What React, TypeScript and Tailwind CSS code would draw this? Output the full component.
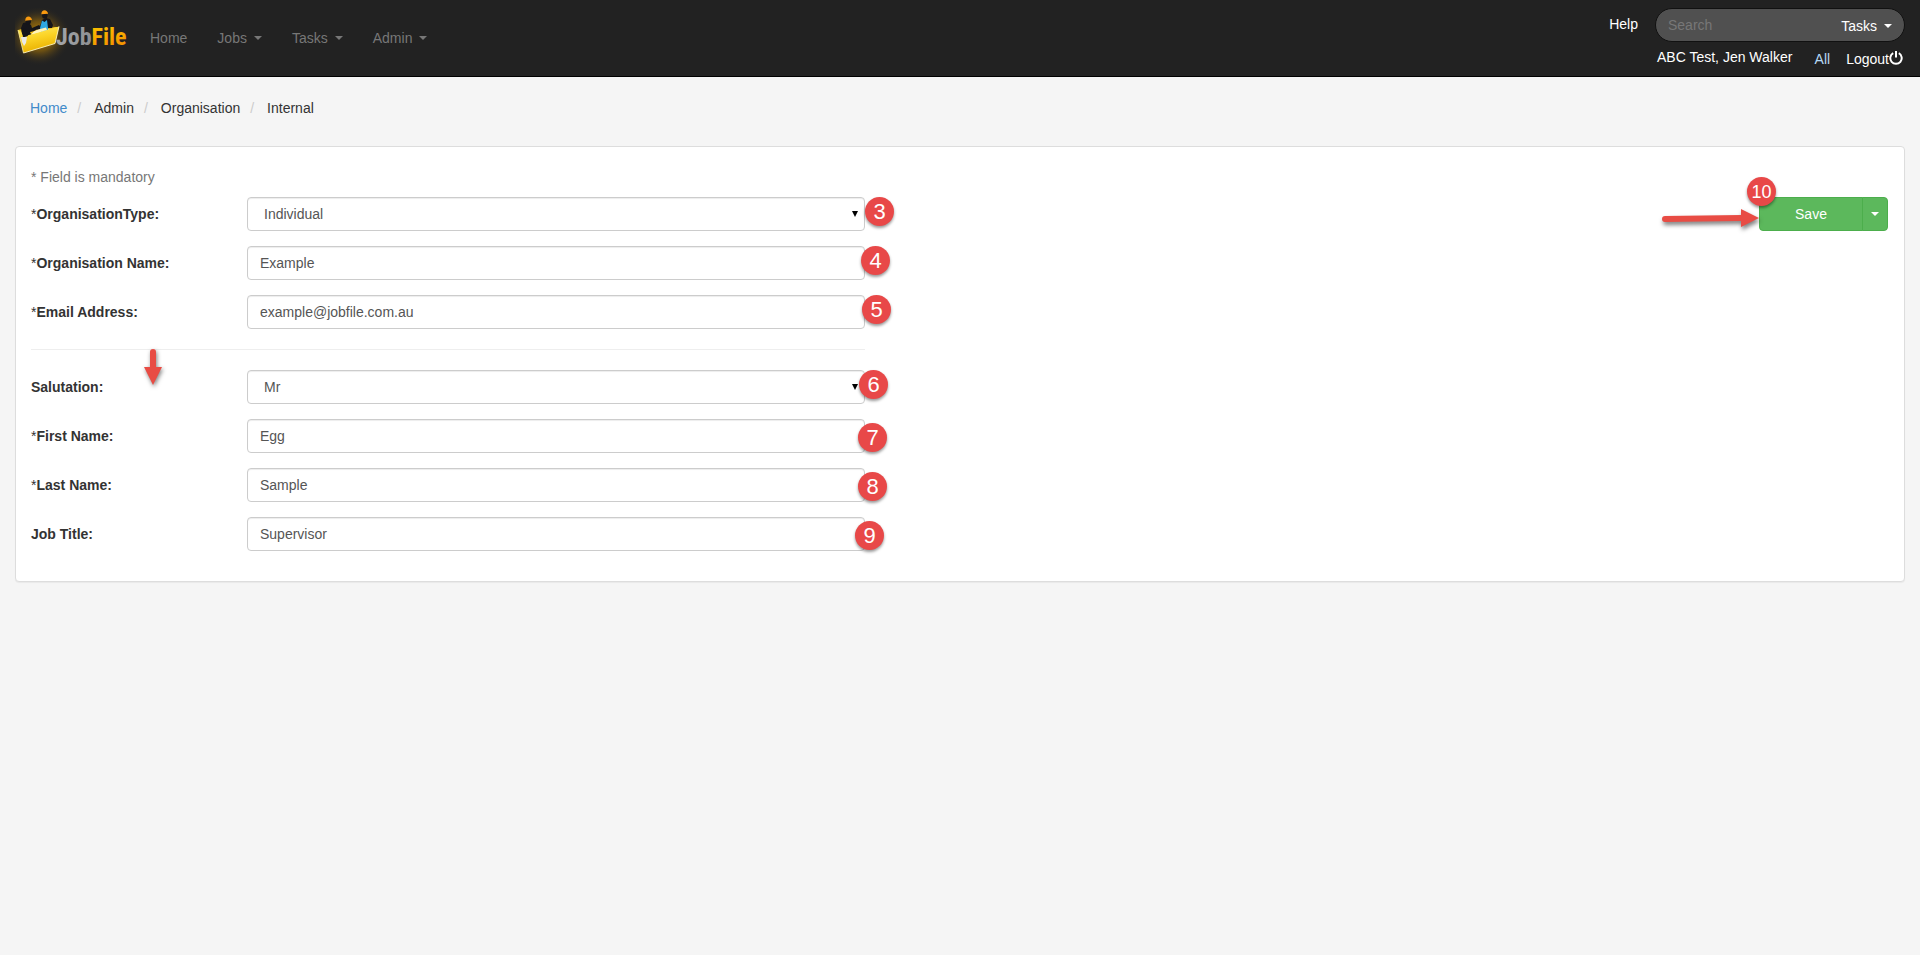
import type { ReactNode } from 'react'

function Caret() {
  return (
    <svg width="8" height="4" viewBox="0 0 8 4" className="shrink-0" aria-hidden="true">
      <path d="M0 0h8L4 4z" fill="currentColor" />
    </svg>
  )
}

function Logo() {
  return (
    <a href="#" aria-label="JobFile" className="block">
      <svg width="116" height="60" viewBox="15 8 116 60" aria-hidden="true">
        <defs>
          <radialGradient id="glow">
            <stop offset="0" stopColor="#f5a800" stopOpacity="0.8" />
            <stop offset="0.5" stopColor="#c98a00" stopOpacity="0.45" />
            <stop offset="1" stopColor="#222" stopOpacity="0" />
          </radialGradient>
          <linearGradient id="folder" x1="0" y1="0" x2="0.3" y2="1">
            <stop offset="0" stopColor="#ffec6a" />
            <stop offset="0.5" stopColor="#fbd325" />
            <stop offset="1" stopColor="#e9b000" />
          </linearGradient>
          <linearGradient id="silver" x1="0" y1="0" x2="1" y2="0">
            <stop offset="0" stopColor="#a5a7aa" />
            <stop offset="1" stopColor="#77797c" />
          </linearGradient>
          <linearGradient id="gold" x1="0" y1="0" x2="0.4" y2="1">
            <stop offset="0" stopColor="#ffd400" />
            <stop offset="1" stopColor="#f39200" />
          </linearGradient>
        </defs>
        <ellipse cx="39" cy="36" rx="32" ry="30" fill="url(#glow)" />
        <path d="M18 30l4-1 4 4 12-3 17-3 4 0-3 8-32 8z" fill="#f0c01c" />
        <path d="M31 35l4-4 12-3 3 2-4 3z" fill="#fff3b8" />
        <path d="M22 36l-1-8 2-5 4-1 4 3 1 3 7-3 2 2-7 4-4 1 2 4-6 2z" fill="#15151a" />
        <ellipse cx="28.300" cy="21.500" rx="2.700" ry="3" fill="#15151a" />
        <path d="M25.200 20.800c0-3 1.500-4.300 3.200-4.300s3.200 1.200 3.600 3.600z" fill="#f99a10" />
        <path d="M36 27l4-1 2-6 4-2 4 1 3 6-1 3-5 0-6 3-3 0z" fill="#15151a" />
        <ellipse cx="44.800" cy="15.500" rx="2.700" ry="3.200" fill="#15151a" />
        <path d="M41.300 14.300c0-3 1.500-4.100 3.200-4.100s3.200 1.200 3.600 3.600z" fill="#f99a10" />
        <path d="M42 20.500l2.500 1.500 2.500-2 1 8 0 3-7 1-1-4z" fill="#2fa8e2" />
        <path d="M18 30l3 1.500 2.500 5L59 26.500l-4 17L23.500 53z" fill="url(#folder)" />
        <path d="M18 30l5.500 23" stroke="#fff0a0" strokeWidth="0.8" />
        <path d="M23.500 53L55 43.500l4-17" stroke="#fff7c8" strokeWidth="0.9" fill="none" />
        <path d="M22 30l3-2 3 8-5 1.500z" fill="#15151a" />
        <path d="M31 34.500l3-3 4-2 8-2 1 2.500z" fill="#fff3b8" />
        <path d="M21 37l6 0-1 6-2 3-2-4z" fill="#e8e8e8" />
        <text
          x="56"
          y="45"
          fontSize="24"
          fontWeight="700"
          fontFamily="'Liberation Sans Narrow', 'Roboto Condensed', 'Liberation Sans', sans-serif"
        >
          <tspan fill="url(#silver)">Job</tspan>
          <tspan fill="url(#gold)">File</tspan>
        </text>
      </svg>
    </a>
  )
}

function NavItem({ label, menu = true }: { label: string; menu?: boolean }) {
  return (
    <li>
      <a href="#" className="flex items-center gap-[7px] px-[15px] py-2 text-[#777]">
        {label}
        {menu && <Caret />}
      </a>
    </li>
  )
}

function Badge({ n, place, small = false }: { n: number; place: string; small?: boolean }) {
  return (
    <span
      className={`absolute z-10 flex size-[29px] items-center justify-center rounded-full bg-[#e84848] text-white shadow-[0_2px_3px_rgba(0,0,0,0.4)] ${small ? 'text-lg' : 'text-[22px]'} ${place}`}
    >
      {n}
    </span>
  )
}

type FieldProps = {
  id: string
  label: string
  value: string
  required?: boolean
  select?: boolean
  badge: ReactNode
}

const control =
  'block h-[34px] w-full rounded border border-[#ccc] bg-white text-[#555] shadow-[inset_0_1px_1px_rgba(0,0,0,0.075)] outline-none focus:border-[#66afe9]'

function Field({ id, label, value, required, select, badge }: FieldProps) {
  return (
    <div className="flex items-center">
      <label htmlFor={id} className="w-[216px] shrink-0 font-bold text-[#333]">
        {required && <span className="font-normal">*</span>}
        {label}
      </label>
      <div className="relative flex-1">
        {select ? (
          <>
            <select id={id} defaultValue={value} className={`${control} appearance-none px-4`}>
              <option>{value}</option>
            </select>
            <svg width="6" height="6" viewBox="0 0 6 6" className="pointer-events-none absolute top-3.5 right-[7px]" aria-hidden="true">
              <path d="M0 0h6L3 6z" fill="#000" />
            </svg>
          </>
        ) : (
          <input id={id} type="text" defaultValue={value} className={`${control} px-3`} />
        )}
        {badge}
      </div>
    </div>
  )
}

export default function App() {
  return (
    <div className="min-h-screen bg-[#f5f5f5] font-['Liberation_Sans',Arial,sans-serif] text-sm leading-5 text-[#333]">
      <header className="flex h-[77px] items-start justify-between border-b border-black bg-[#222] px-[15px]">
        <div className="flex pt-2">
          <Logo />
          <nav className="ml-1 pt-3">
            <ul className="flex">
              <NavItem label="Home" menu={false} />
              <NavItem label="Jobs" />
              <NavItem label="Tasks" />
              <NavItem label="Admin" />
            </ul>
          </nav>
        </div>
        <div className="flex gap-[17px] pt-2">
          <a href="#" className="pt-1.5 text-white">
            Help
          </a>
          <div>
            <div className="flex h-[34px] w-[250px] items-center rounded-full border border-[#111] bg-[#505050] pr-3 pl-3">
              <input
                type="search"
                aria-label="Search"
                placeholder="Search"
                className="min-w-0 flex-1 bg-transparent text-white outline-none placeholder:text-[#777]"
              />
              <button type="button" className="flex items-center gap-[7px] pt-0.5 text-white">
                Tasks
                <Caret />
              </button>
            </div>
            <div className="flex justify-between px-0.5 pt-[5px] text-white">
              <span>ABC Test, Jen Walker</span>
              <div className="flex gap-4 pt-0.5">
                <a href="#" className="text-[#b5d9f5]">
                  All
                </a>
                <a href="#" className="flex">
                  Logout
                  <svg width="14" height="14" viewBox="0 0 14 14" className="mt-0.5" fill="none" stroke="currentColor" strokeWidth="2" aria-hidden="true">
                    <path d="M4.200 2.200a5.700 5.700 0 1 0 5.600 0" />
                    <path d="M7 0v6.500" />
                  </svg>
                </a>
              </div>
            </div>
          </div>
        </div>
      </header>

      <nav aria-label="Breadcrumb" className="px-[30px] pt-[21px]">
        <ol className="flex">
          <li>
            <a href="#" className="text-[#428bca]">
              Home
            </a>
          </li>
          {['Admin', 'Organisation', 'Internal'].map((item) => (
            <li key={item} className="flex">
              <span className="pr-[13px] pl-2.5 text-[#ccc]">/</span>
              {item}
            </li>
          ))}
        </ol>
      </nav>

      <main className="mx-[15px] mt-7 rounded border border-[#ddd] bg-white px-[15px] pt-5 pb-[30px] shadow-[0_1px_1px_rgba(0,0,0,0.05)]">
        <p className="text-[#777]">* Field is mandatory</p>
        <form className="mt-2.5 flex items-start justify-between" onSubmit={(e) => e.preventDefault()}>
          <div className="relative w-[calc(45%-2px)]">
            <div className="flex flex-col gap-[15px]">
              <Field id="type" label="OrganisationType:" value="Individual" required select badge={<Badge n={3} place="top-0 -right-[29px]" />} />
              <Field id="name" label="Organisation Name:" value="Example" required badge={<Badge n={4} place="top-0 -right-[25px]" />} />
              <Field id="email" label="Email Address:" value="example@jobfile.com.au" required badge={<Badge n={5} place="top-0 -right-[26px]" />} />
            </div>
            <div className="relative my-5">
              <hr className="border-[#eee]" />
              <svg width="26" height="44" viewBox="0 0 26 44" className="absolute top-0 left-[109px] drop-shadow-[1px_2px_2px_rgba(0,0,0,0.5)]" aria-hidden="true">
                <path d="M10 3q0-3 3-3t3 3v15h6l-9 18-9-18h6z" fill="#e84c44" />
              </svg>
            </div>
            <div className="flex flex-col gap-[15px]">
              <Field id="salutation" label="Salutation:" value="Mr" select badge={<Badge n={6} place="top-0 -right-[23px]" />} />
              <Field id="first" label="First Name:" value="Egg" required badge={<Badge n={7} place="top-1 -right-[22px]" />} />
              <Field id="last" label="Last Name:" value="Sample" required badge={<Badge n={8} place="top-1 -right-[22px]" />} />
              <Field id="job" label="Job Title:" value="Supervisor" badge={<Badge n={9} place="top-1 -right-[19px]" />} />
            </div>
          </div>
          <div className="relative mr-px flex">
            <button type="submit" className="h-[34px] w-[104px] rounded-l border border-[#4cae4c] bg-[#5cb85c] text-white">
              Save
            </button>
            <button
              type="button"
              aria-label="More save options"
              className="-ml-px flex h-[34px] w-[26px] items-center justify-center rounded-r border border-[#4cae4c] bg-[#5cb85c] text-white"
            >
              <Caret />
            </button>
            <Badge n={10} small place="-top-5 -left-3" />
            <svg width="100" height="26" viewBox="0 0 100 26" className="absolute top-2 -left-[98px] drop-shadow-[1px_3px_2px_rgba(0,0,0,0.5)]" aria-hidden="true">
              <path d="M4 11l76-1V4l18 9-18 9v-6L4 17q-3 0-3-3t3-3z" fill="#e84c44" />
            </svg>
          </div>
        </form>
      </main>
    </div>
  )
}
